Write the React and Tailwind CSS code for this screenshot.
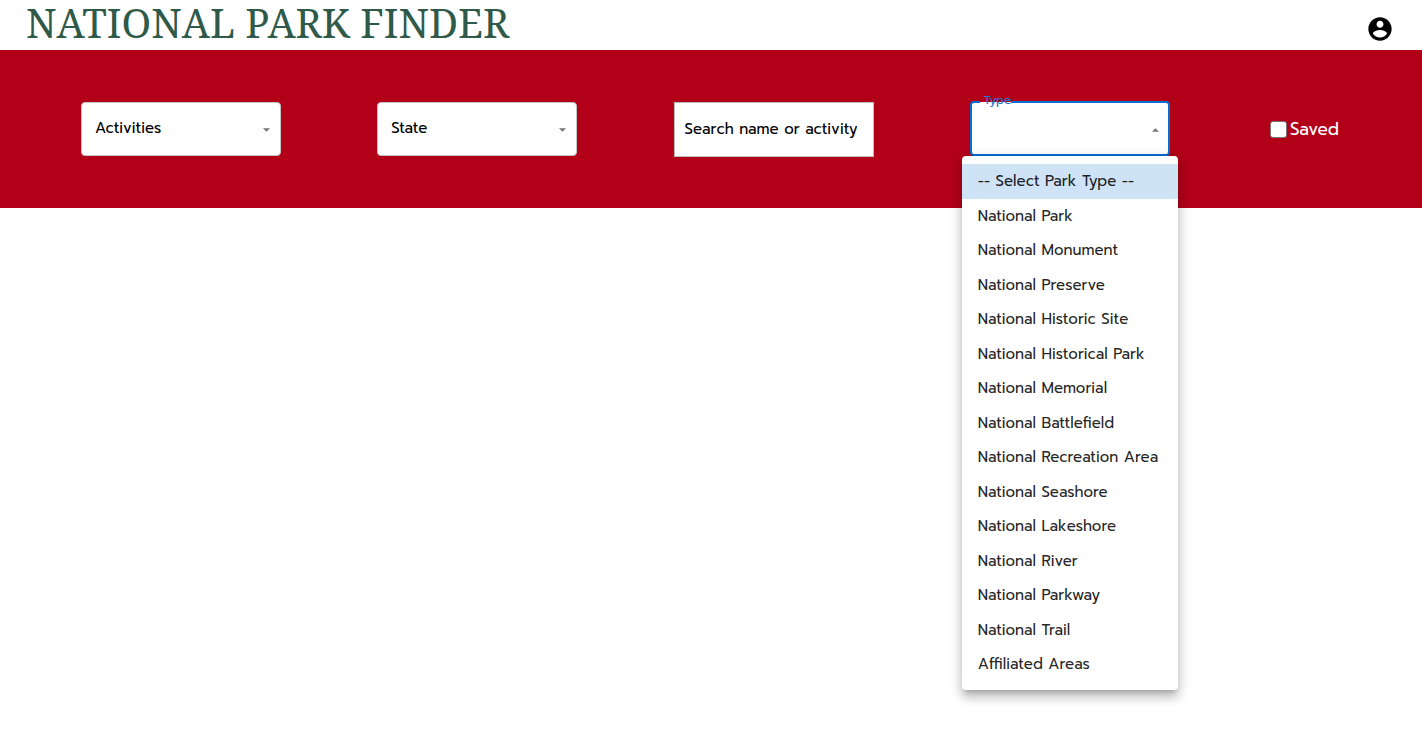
import { useState } from 'react';

const PARK_TYPES = [
  'National Park',
  'National Monument',
  'National Preserve',
  'National Historic Site',
  'National Historical Park',
  'National Memorial',
  'National Battlefield',
  'National Recreation Area',
  'National Seashore',
  'National Lakeshore',
  'National River',
  'National Parkway',
  'National Trail',
  'Affiliated Areas',
];

function Arrow({ up = false }) {
  return (
    <svg
      viewBox="0 0 8 4"
      className="pointer-events-none absolute top-[26px] right-[11px] h-1 w-[7px] text-[#757575]"
      fill="currentColor"
      aria-hidden="true"
    >
      <path d={up ? 'M0 4l4-4 4 4z' : 'M0 0l4 4 4-4z'} />
    </svg>
  );
}

function SelectField({ id, label }) {
  return (
    <div className="relative w-[200px]">
      <select
        id={id}
        aria-label={label}
        className="block h-[54px] w-full appearance-none rounded border border-[#c4c4c4] bg-white pr-8 pb-[2px] pl-[13px] text-[15px] text-black"
      >
        <option>{label}</option>
      </select>
      <Arrow />
    </div>
  );
}

function TypeField() {
  const [open, setOpen] = useState(true);
  const [value, setValue] = useState('');
  const choose = (next) => {
    setValue(next);
    setOpen(false);
  };
  return (
    <div className="relative w-[200px]">
      <select
        id="type"
        value={value}
        onChange={(e) => setValue(e.target.value)}
        onMouseDown={(e) => {
          e.preventDefault();
          setOpen(!open);
        }}
        className="-mt-px block h-[55px] w-full appearance-none rounded border-2 border-[#0a6ed1] bg-white pr-8 pl-3 text-[15px] text-black outline-none"
      >
        <option value="" label=" " />
        {PARK_TYPES.map((type) => (
          <option key={type}>{type}</option>
        ))}
      </select>
      <label
        htmlFor="type"
        className="absolute -top-2 left-[10px] h-[14px] w-[31px] bg-linear-to-b from-[#b20019] from-60% to-white to-60% pl-1 text-[12px] leading-[12px] text-[#1976d2]"
      >
        Type
      </label>
      <Arrow up={open} />
      {open && (
        <ul
          role="listbox"
          aria-label="Park type"
          className="absolute top-[54px] -left-2 z-10 grid h-[534px] w-[216px] auto-rows-fr rounded bg-white py-2 text-[15px] text-black/87 shadow-[0_5px_5px_-3px_rgba(0,0,0,0.2),0_8px_10px_1px_rgba(0,0,0,0.14),0_3px_14px_2px_rgba(0,0,0,0.12)]"
        >
          {['', ...PARK_TYPES].map((type) => (
            <li key={type} className="flex">
              <button
                type="button"
                role="option"
                aria-selected={type === value}
                onClick={() => choose(type)}
                className="w-full px-4 text-left whitespace-nowrap hover:bg-black/5 aria-selected:bg-[#cfe3f7]"
              >
                {type || '-- Select Park Type --'}
              </button>
            </li>
          ))}
        </ul>
      )}
    </div>
  );
}

export default function App() {
  return (
    <div className="min-h-screen bg-white font-['Prompt','Noto_Sans',sans-serif] antialiased">
      <header className="flex h-[50px] items-start justify-between pr-7 pl-[26px]">
        <h1 className="font-['Noto_Serif','Droid_Serif','Liberation_Serif',serif] text-[40px] leading-[46px] text-[#2f5949]">
          NATIONAL PARK FINDER
        </h1>
        <button type="button" aria-label="Account" className="mt-[15px]">
          <svg viewBox="0 0 24 24" className="size-7" fill="currentColor" aria-hidden="true">
            <path d="M12 2C6.48 2 2 6.48 2 12s4.48 10 10 10 10-4.48 10-10S17.52 2 12 2zm0 3c1.66 0 3 1.34 3 3s-1.34 3-3 3-3-1.34-3-3 1.34-3 3-3zm0 14.2c-2.5 0-4.71-1.28-6-3.22.03-1.99 4-3.08 6-3.08 1.99 0 5.97 1.09 6 3.08-1.29 1.94-3.5 3.22-6 3.22z" />
          </svg>
        </button>
      </header>
      <main>
        <form className="flex h-[158px] items-start justify-between bg-[#b20019] px-[81px] pt-[52px]">
          <SelectField id="activities" label="Activities" />
          <SelectField id="state" label="State" />
          <input
            type="text"
            aria-label="Search name or activity"
            placeholder="Search name or activity"
            className="h-[55px] w-[200px] border border-[#bdbdbd] bg-white pr-4 pb-[2px] pl-[10px] text-[15px] placeholder:text-black"
          />
          <TypeField />
          <label className="flex h-[55px] w-[75px] items-center gap-[3px] pl-1 text-[17px] text-white">
            <input
              type="checkbox"
              className="size-[17px] shrink-0 appearance-none rounded-[3px] border border-[#767676] bg-white checked:bg-[#1976d2]"
            />
            Saved
          </label>
        </form>
      </main>
    </div>
  );
}
